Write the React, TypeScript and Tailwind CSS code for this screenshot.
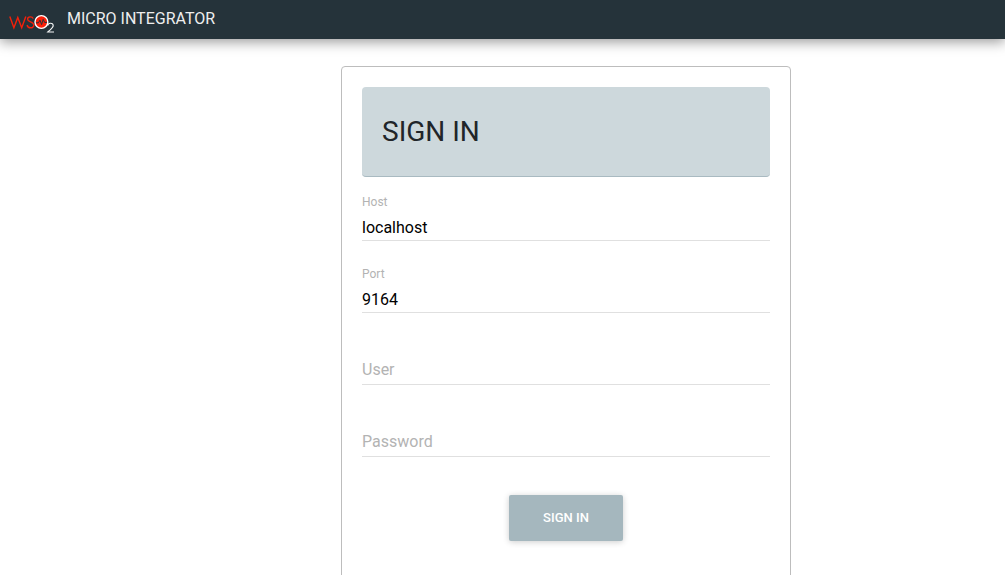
import { useId, useState } from "react";
import type { FormEvent } from "react";
import clsx from "clsx";

function Logo() {
  return (
    <svg width="46" height="22" viewBox="0 0 46 22" role="img" aria-label="WSO2">
      <g fill="none" stroke="#f5200a" strokeWidth="1.4" strokeLinejoin="miter">
        <path d="M0.8 5.4 L4.9 16.8 L8.8 6.4 L12.7 16.8 L16.8 5.4" />
        <path d="M24.2 7.6 C23.4 5.2 18.6 5.1 18.6 8.2 C18.6 11.2 24.8 10.5 24.8 14 C24.8 17.8 18.8 17.7 18.1 14" />
      </g>
      <circle cx="32.4" cy="11" r="6.4" fill="#fb1f08" stroke="#ffffff" strokeWidth="1.4" />
      <path
        d="M27 11.8 H29.4 L31 9.2 L32.6 13.6 L34.2 8.4 L35.6 11.4 H38"
        fill="none"
        stroke="#25333a"
        strokeWidth="1"
      />
      <path
        d="M38.9 14.4 C39 11.6 44.2 11.5 44.2 14.8 C44.2 17 41.2 18.6 38.8 21 H45"
        fill="none"
        stroke="#f4f6f6"
        strokeWidth="1.1"
      />
    </svg>
  );
}

type FieldProps = {
  label: string;
  name: string;
  type?: string;
  initial?: string;
};

function Field({ label, name, type = "text", initial = "" }: FieldProps) {
  const id = useId();
  const [value, setValue] = useState(initial);
  const [focused, setFocused] = useState(false);
  const floated = focused || value !== "";

  return (
    <div className="relative pt-4">
      <label
        htmlFor={id}
        className={clsx(
          "pointer-events-none absolute left-0 text-[#b3b3b3]",
          floated ? "top-0 text-xs leading-4" : "top-5 text-base leading-6",
        )}
      >
        {label}
      </label>
      <input
        id={id}
        name={name}
        type={type}
        value={value}
        onChange={(event) => setValue(event.target.value)}
        onFocus={() => setFocused(true)}
        onBlur={() => setFocused(false)}
        className="block h-[31px] w-full border-b border-[#e0e0e0] bg-transparent pt-1 text-base text-black outline-none"
      />
    </div>
  );
}

export default function App() {
  const handleSubmit = (event: FormEvent) => event.preventDefault();

  return (
    <div className="min-h-screen bg-white font-[Roboto,sans-serif]">
      <header className="flex h-[39px] items-center gap-3 bg-[#25333a] pl-[9px] shadow-[0_3px_12px_rgba(0,0,0,0.4)]">
        <a href="#home" className="pt-1">
          <Logo />
        </a>
        <span className="pb-0.5 text-base text-[#eeeeee]">MICRO INTEGRATOR</span>
      </header>
      <main className="flex justify-center pt-[27px] pl-[127px]">
        <form
          onSubmit={handleSubmit}
          className="w-full max-w-[450px] rounded border border-[#bdbdbd] px-5 pt-5 pb-20"
        >
          <div className="rounded border-b border-[#a9bac1] bg-[#cdd8dc] px-5 py-6">
            <h1 className="text-[28px] leading-[41px] text-[#212529]">SIGN IN</h1>
          </div>
          <div className="flex flex-col gap-[25px] pt-[17px]">
            <Field label="Host" name="host" initial="localhost" />
            <Field label="Port" name="port" initial="9164" />
            <Field label="User" name="user" />
            <Field label="Password" name="password" type="password" />
          </div>
          <div className="flex justify-center pt-[38px]">
            <button
              type="submit"
              className="h-[46px] w-[114px] rounded-xs bg-[#a5b7be] text-[13px] font-medium text-white shadow-[0_1px_6px_rgba(0,0,0,0.2)]"
            >
              SIGN IN
            </button>
          </div>
        </form>
      </main>
    </div>
  );
}
